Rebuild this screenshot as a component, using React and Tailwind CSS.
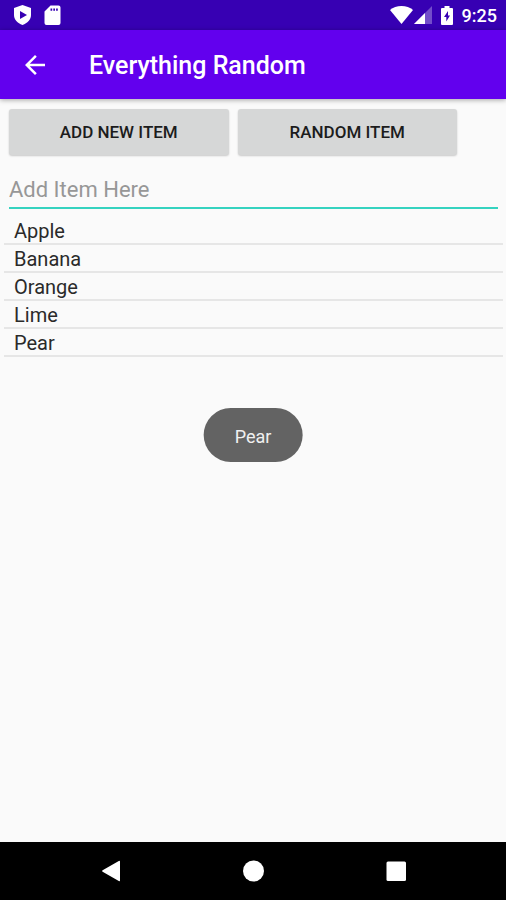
import { useState } from "react";

const StatusBar = () => {
    return (
        <div className="h-[30px] bg-[#3700b3] flex items-center justify-between pl-3 pr-[9px] text-white">
            <div className="flex items-center gap-2">
                <svg className="w-[22px] h-[22px]" viewBox="0 0 22 22" fill="currentColor" aria-hidden="true">
                    <path
                        fillRule="evenodd"
                        d="M10.500 1 19 4v7c0 4.500-3.500 8.200-8.500 10C5.500 19.200 2 15.500 2 11V4zM8 7v8l7-4z"
                    />
                </svg>
                <svg className="w-[22px] h-[22px]" viewBox="0 0 22 22" fill="currentColor" aria-hidden="true">
                    <path
                        fillRule="evenodd"
                        d="M16.500 1.500H8.500L2.500 7.500V19a2 2 0 0 0 2 2h12a2 2 0 0 0 2-2V3.500a2 2 0 0 0-2-2zM8.500 4.500h1.700v2.200H8.500zM11.300 4.500H13v2.200h-1.700zM14.100 4.500h1.700v2.200h-1.700z"
                    />
                </svg>
            </div>
            <div className="flex items-center">
                <svg className="w-[23px] h-[18px]" viewBox="0 0 23 18" fill="currentColor" aria-hidden="true">
                    <path d="M11.500 18 0 4C3 1.500 7 0 11.500 0S20 1.500 23 4z" />
                </svg>
                <svg className="w-[18px] h-[18px] ml-px" viewBox="0 0 18 18" fill="currentColor" aria-hidden="true">
                    <path d="M0 18 18 0v18z" opacity="0.3" />
                    <path d="M0 18 11 7v11z" />
                </svg>
                <svg className="w-3 h-[19px] ml-[9px]" viewBox="0 0 12 19" fill="currentColor" aria-hidden="true">
                    <path
                        fillRule="evenodd"
                        d="M3.500 0h5v2H11a1 1 0 0 1 1 1v15a1 1 0 0 1-1 1H1a1 1 0 0 1-1-1V3a1 1 0 0 1 1-1h2.500zM7 5l-4 6h2.300v4.500L9 9.500H7z"
                    />
                </svg>
                <span className="ml-[9px] pt-0.5 text-[18px] leading-5 font-medium">9:25</span>
            </div>
        </div>
    );
};

const AppBar = ({ title }) => {
    return (
        <header className="h-[69px] bg-[#6200ee] flex items-center gap-[39px] pl-5 text-white shadow-[0_1px_5px_rgba(0,0,0,0.35)]">
            <button type="button" aria-label="Back" className="cursor-pointer">
                <svg className="w-[30px] h-[30px]" viewBox="0 0 24 24" fill="currentColor" aria-hidden="true">
                    <path d="M20 11H7.830l5.590-5.590L12 4l-8 8 8 8 1.410-1.410L7.830 13H20z" />
                </svg>
            </button>
            <h1 className="pt-0.5 text-[25px] leading-8 font-medium">{title}</h1>
        </header>
    );
};

const ActionButton = ({ children, onClick }) => {
    return (
        <button
            type="button"
            onClick={onClick}
            className="flex-1 h-[46px] pt-0.5 rounded-[3px] bg-[#d6d7d7] text-[17px] font-medium text-[#1c1c1c] uppercase shadow-[0_1px_2px_rgba(0,0,0,0.2)] cursor-pointer"
        >
            {children}
        </button>
    );
};

const NavBar = () => {
    return (
        <nav className="h-[58px] pl-0.5 bg-black flex items-center justify-center gap-[114px] text-white">
            <button type="button" aria-label="Back" className="cursor-pointer">
                <svg className="w-7 h-7" viewBox="0 0 28 28" fill="currentColor" aria-hidden="true">
                    <path d="M22 4.500v19a.8.8 0 0 1-1.200.6L4.600 14.700a.8.8 0 0 1 0-1.400L20.800 3.900A.8.8 0 0 1 22 4.500z" />
                </svg>
            </button>
            <button type="button" aria-label="Home" className="cursor-pointer">
                <svg className="w-7 h-7" viewBox="0 0 28 28" fill="currentColor" aria-hidden="true">
                    <circle cx="13.500" cy="14" r="10.500" />
                </svg>
            </button>
            <button type="button" aria-label="Recent apps" className="cursor-pointer">
                <svg className="w-7 h-7" viewBox="0 0 28 28" fill="currentColor" aria-hidden="true">
                    <rect x="4.500" y="4.500" width="19.500" height="19.500" rx="1.500" />
                </svg>
            </button>
        </nav>
    );
};

const App = () => {
    const [items, setItems] = useState(["Apple", "Banana", "Orange", "Lime", "Pear"]);
    const [text, setText] = useState("");
    const [toast, setToast] = useState("Pear");

    const handleAdd = () => {
        if (!text.trim()) return;
        setItems([...items, text.trim()]);
        setText("");
    };

    const handleRandom = () => {
        setToast(items[Math.floor(Math.random() * items.length)]);
    };

    const renderedItems = items.map((item, index) => {
        return (
            <li key={index} className="h-7 pl-[10px] border-b-2 border-[#e6e6e6] text-[20px] leading-7 text-[#2a2a2a]">
                {item}
            </li>
        );
    });

    return (
        <div className="relative min-h-screen flex flex-col bg-[#fafafa] font-['Roboto',sans-serif]">
            <StatusBar />
            <AppBar title="Everything Random" />
            <main className="flex-1 pt-[10px]">
                <div className="flex gap-[9px] pl-[9px] pr-[49px]">
                    <ActionButton onClick={handleAdd}>Add new item</ActionButton>
                    <ActionButton onClick={handleRandom}>Random item</ActionButton>
                </div>
                <div className="pl-[9px] pr-2 pt-[18px]">
                    <input
                        type="text"
                        aria-label="Add Item Here"
                        placeholder="Add Item Here"
                        value={text}
                        onChange={(e) => setText(e.target.value)}
                        className="block w-full h-9 pb-0.5 border-b-2 border-[#35d3c0] text-[22px] text-[#2a2a2a] placeholder:text-[#979797] outline-none"
                    />
                </div>
                <ul className="mt-2 ml-1 mr-[3px]">{renderedItems}</ul>
            </main>
            {toast && (
                <div
                    role="status"
                    className="absolute top-[408px] left-1/2 -translate-x-1/2 h-[54px] px-[31px] pt-0.5 flex items-center rounded-full bg-[#636363] text-[18px] text-[#f0f0f0]"
                >
                    {toast}
                </div>
            )}
            <NavBar />
        </div>
    );
};

export default App;
